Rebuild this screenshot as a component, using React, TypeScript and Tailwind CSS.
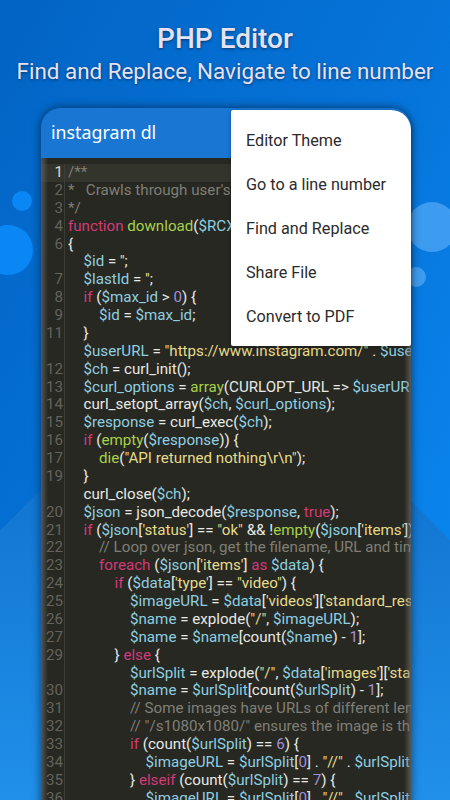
import React from "react";

type Seg = [string, string];
const W = "text-[#e8e8e4]", V = "text-[#8fcfe0]", S = "text-[#e6db8c]", K = "text-[#d23a78]", F = "text-[#a8d14a]", N = "text-[#a48fd8]", C = "text-[#7f7f76]";

const lines: { n: string; i: number; s: Seg[] }[] = [
  { n: "1", i: 0, s: [[C, "/**"]] },
  { n: "2", i: 0, s: [[C, "*   Crawls through user's"]] },
  { n: "3", i: 0, s: [[C, "*/"]] },
  { n: "4", i: 0, s: [[K, "function "], [F, "download"], [W, "("], [V, "$RCX"]] },
  { n: "6", i: 0, s: [[W, "{"]] },
  { n: "", i: 1, s: [[V, "$id"], [W, " = "], [S, "''"], [W, ";"]] },
  { n: "7", i: 1, s: [[V, "$lastId"], [W, " = "], [S, "''"], [W, ";"]] },
  { n: "8", i: 1, s: [[K, "if"], [W, " ("], [V, "$max_id"], [W, " > "], [N, "0"], [W, ") {"]] },
  { n: "9", i: 2, s: [[V, "$id"], [W, " = "], [V, "$max_id"], [W, ";"]] },
  { n: "11", i: 1, s: [[W, "}"]] },
  { n: "", i: 1, s: [[V, "$userURL"], [W, " = "], [S, "\"https://www.instagram.com/\""], [W, " . "], [V, "$user"]] },
  { n: "12", i: 1, s: [[V, "$ch"], [W, " = curl_init();"]] },
  { n: "13", i: 1, s: [[V, "$curl_options"], [W, " = "], [F, "array"], [W, "(CURLOPT_URL => "], [V, "$userUR"]] },
  { n: "14", i: 1, s: [[W, "curl_setopt_array("], [V, "$ch"], [W, ", "], [V, "$curl_options"], [W, ");"]] },
  { n: "15", i: 1, s: [[V, "$response"], [W, " = curl_exec("], [V, "$ch"], [W, ");"]] },
  { n: "16", i: 1, s: [[K, "if"], [W, " ("], [F, "empty"], [W, "("], [V, "$response"], [W, ")) {"]] },
  { n: "17", i: 2, s: [[F, "die"], [W, "("], [S, "\"API returned nothing\\r\\n\""], [W, ");"]] },
  { n: "19", i: 1, s: [[W, "}"]] },
  { n: "", i: 1, s: [[W, "curl_close("], [V, "$ch"], [W, ");"]] },
  { n: "20", i: 1, s: [[V, "$json"], [W, " = json_decode("], [V, "$response"], [W, ", "], [K, "true"], [W, ");"]] },
  { n: "21", i: 1, s: [[K, "if"], [W, " ("], [V, "$json"], [W, "["], [S, "'status'"], [W, "] == "], [S, "\"ok\""], [W, " && !"], [F, "empty"], [W, "("], [V, "$json"], [W, "["], [S, "'items'"], [W, "])"]] },
  { n: "22", i: 2, s: [[C, "// Loop over json, get the filename, URL and tim"]] },
  { n: "23", i: 2, s: [[K, "foreach"], [W, " ("], [V, "$json"], [W, "["], [S, "'items'"], [W, "] "], [K, "as"], [W, " "], [V, "$data"], [W, ") {"]] },
  { n: "24", i: 3, s: [[K, "if"], [W, " ("], [V, "$data"], [W, "["], [S, "'type'"], [W, "] == "], [S, "\"video\""], [W, ") {"]] },
  { n: "25", i: 4, s: [[V, "$imageURL"], [W, " = "], [V, "$data"], [W, "["], [S, "'videos'"], [W, "]["], [S, "'standard_res"]] },
  { n: "26", i: 4, s: [[V, "$name"], [W, " = explode("], [S, "\"/\""], [W, ", "], [V, "$imageURL"], [W, ");"]] },
  { n: "27", i: 4, s: [[V, "$name"], [W, " = "], [V, "$name"], [W, "[count("], [V, "$name"], [W, ") - "], [N, "1"], [W, "];"]] },
  { n: "29", i: 3, s: [[W, "} "], [K, "else"], [W, " {"]] },
  { n: "", i: 4, s: [[V, "$urlSplit"], [W, " = explode("], [S, "\"/\""], [W, ", "], [V, "$data"], [W, "["], [S, "'images'"], [W, "]["], [S, "'stan"]] },
  { n: "30", i: 4, s: [[V, "$name"], [W, " = "], [V, "$urlSplit"], [W, "[count("], [V, "$urlSplit"], [W, ") - "], [N, "1"], [W, "];"]] },
  { n: "31", i: 4, s: [[C, "// Some images have URLs of different len"]] },
  { n: "32", i: 4, s: [[C, "// \"/s1080x1080/\" ensures the image is th"]] },
  { n: "33", i: 4, s: [[K, "if"], [W, " (count("], [V, "$urlSplit"], [W, ") == "], [N, "6"], [W, ") {"]] },
  { n: "34", i: 5, s: [[V, "$imageURL"], [W, " = "], [V, "$urlSplit"], [W, "["], [N, "0"], [W, "] . "], [S, "\"//\""], [W, " . "], [V, "$urlSplit"]] },
  { n: "35", i: 4, s: [[W, "} "], [K, "elseif"], [W, " (count("], [V, "$urlSplit"], [W, ") == "], [N, "7"], [W, ") {"]] },
  { n: "36", i: 5, s: [[V, "$imageURL"], [W, " = "], [V, "$urlSplit"], [W, "["], [N, "0"], [W, "] . "], [S, "\"//\""], [W, " . "], [V, "$urlSplit"]] },
];

const menu = ["Editor Theme", "Go to a line number", "Find and Replace", "Share File", "Convert to PDF"];

export default function App() {
  return (
    <div className="relative w-[450px] h-[800px] overflow-hidden bg-gradient-to-br from-[#0264c4] via-[#0674da] to-[#0c8cf6] font-['Roboto',sans-serif]">
      <svg className="absolute inset-0" width="450" height="800" viewBox="0 0 450 800">
        <defs>
          <linearGradient id="hill" x1="0" y1="0" x2="0" y2="1">
            <stop offset="0" stopColor="#0a68c4" />
            <stop offset="1" stopColor="#2090ea" />
          </linearGradient>
        </defs>
        <path d="M0 531 L60 470 L225 330 L400 490 L450 540 L450 800 L0 800 Z" fill="url(#hill)" />
        <circle cx="22" cy="201" r="10" fill="#0a87f5" />
        <circle cx="8" cy="250" r="25" fill="#0a87f5" />
        <circle cx="432" cy="227" r="25" fill="#3d9cf0" />
        <circle cx="416" cy="277" r="10" fill="#3d9cf0" />
      </svg>
      <div className="relative flex flex-col items-center pt-[23px] text-[#e6e2f4] [text-shadow:0_1px_3px_rgba(0,0,0,0.5)]">
        <div className="text-[28px] leading-[32px] font-medium">PHP Editor</div>
        <div className="text-[22.4px] leading-[32px] whitespace-nowrap">Find and Replace, Navigate to line number</div>
      </div>
      <div className="absolute left-[41px] top-[108px] w-[370px] h-[700px] rounded-t-[20px] overflow-hidden shadow-[0_0_10px_rgba(0,0,0,0.55)]">
        <div className="h-[50px] bg-[#1976d2] pl-[10px] pt-[7px] text-[17.8px] leading-[34px] text-white font-['Noto_Sans',sans-serif]">instagram dl</div>
        <div className="h-[650px] bg-[#272822] text-[15.15px] leading-[17.88px] whitespace-nowrap overflow-hidden pt-[6px]">
          {lines.map((l, idx) => (
            <div key={idx} className={`flex h-[17.88px] ${idx === 0 ? "bg-[#33342c]" : ""}`}>
              <div className={`w-[24px] shrink-0 text-right border-r border-[#3c3d36] mr-[3px] pr-[1px] ${idx === 0 ? "text-[#d8d8d4]" : "text-[#63635c]"}`}>{l.n}</div>
              <div className="flex-1 overflow-hidden">
                {l.i > 0 && <span className="inline-block" style={{ width: l.i * 15.5 }} />}
                {l.s.map((seg, j) => (
                  <span key={j} className={seg[0]} style={{ whiteSpace: "pre" }}>{seg[1]}</span>
                ))}
              </div>
            </div>
          ))}
        </div>
        <div className="absolute left-0 top-[50px] bottom-0 w-[7px] bg-gradient-to-r from-[#6a6a68] to-transparent opacity-70 pointer-events-none" />
        <div className="absolute right-0 top-[50px] bottom-0 w-[7px] bg-gradient-to-l from-[#6a6a68] to-transparent opacity-70 pointer-events-none" />
      </div>
      <div className="absolute left-[231px] top-[110px] w-[180px] h-[236px] bg-white rounded-tr-[20px] rounded-[2px] pt-[9px] shadow-[0_1px_4px_rgba(0,0,0,0.3)]">
        {menu.map((m) => (
          <div key={m} className="h-[44px] pl-[15px] text-[16.2px] leading-[44px] text-[#2b2b2b]">{m}</div>
        ))}
      </div>
    </div>
  );
}
